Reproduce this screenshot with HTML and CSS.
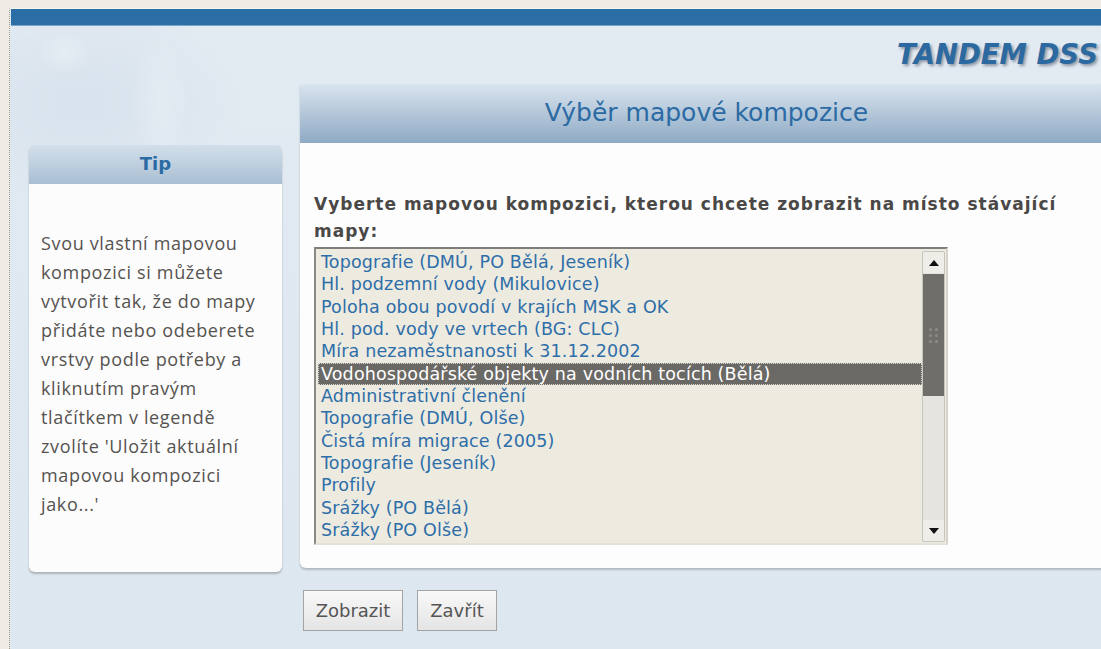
FILE: index.html
```html
<!DOCTYPE html>
<html lang="cs">
<head>
<meta charset="utf-8">
<title>TANDEM DSS – Výběr mapové kompozice</title>
<link rel="stylesheet" href="styles.css">
</head>
<body>
<div class="page">
  <div class="topbar"></div>
  <div class="brand">TANDEM DSS</div>
  <div class="content">
    <aside class="tip">
      <div class="tip-head">Tip</div>
      <div class="tip-body">Svou vlastní mapovou kompozici si můžete vytvořit tak, že do mapy přidáte nebo odeberete vrstvy podle potřeby a kliknutím pravým tlačítkem v legendě zvolíte 'Uložit aktuální mapovou kompozici jako...'</div>
    </aside>
    <main class="main">
      <section class="panel">
        <h1 class="panel-head">Výběr mapové kompozice</h1>
        <div class="panel-body">
          <p class="prompt">Vyberte mapovou kompozici, kterou chcete zobrazit na místo stávající mapy:</p>
          <div class="listbox">
            <ul class="options">
              <li>Topografie (DMÚ, PO Bělá, Jeseník)</li>
              <li>Hl. podzemní vody (Mikulovice)</li>
              <li>Poloha obou povodí v krajích MSK a OK</li>
              <li>Hl. pod. vody ve vrtech (BG: CLC)</li>
              <li>Míra nezaměstnanosti k 31.12.2002</li>
              <li class="selected">Vodohospodářské objekty na vodních tocích (Bělá)</li>
              <li>Administrativní členění</li>
              <li>Topografie (DMÚ, Olše)</li>
              <li>Čistá míra migrace (2005)</li>
              <li>Topografie (Jeseník)</li>
              <li>Profily</li>
              <li>Srážky (PO Bělá)</li>
              <li>Srážky (PO Olše)</li>
            </ul>
            <div class="scrollbar">
              <div class="sb-btn"><span class="arrow up"></span></div>
              <div class="sb-track">
                <div class="sb-thumb">
                  <div class="grip">
                    <i></i><i></i><i></i><i></i><i></i><i></i>
                  </div>
                </div>
              </div>
              <div class="sb-btn"><span class="arrow down"></span></div>
            </div>
          </div>
        </div>
      </section>
      <div class="actions">
        <button class="btn btn-show" type="button">Zobrazit</button>
        <button class="btn btn-close" type="button">Zavřít</button>
      </div>
    </main>
  </div>
</div>
</body>
</html>
```

FILE: styles.css
```css
html, body {
  margin: 0;
  padding: 0;
  height: 100%;
}

body {
  background: #efece5;
  overflow: hidden;
  font-family: "DejaVu Sans", Verdana, sans-serif;
}

.page {
  margin: 8px 0 0 9px;
  height: calc(100% - 8px);
  border-left: 1px dotted #a79d86;
  border-top: 1px solid #f7f5f0;
  padding-left: 1px;
  background-color: #dee8f1;
  background-image:
    radial-gradient(ellipse 40px 30px at 55px 45px, rgba(255,255,255,0.25), rgba(255,255,255,0) 70%),
    radial-gradient(ellipse 40px 90px at 150px 95px, rgba(255,255,255,0.22), rgba(255,255,255,0) 75%),
    radial-gradient(ellipse 200px 130px at 70px 95px, rgba(196,212,228,0.35), rgba(196,212,228,0) 80%),
    linear-gradient(#e2eaf2, #dde7f0);
  box-sizing: border-box;
}

.topbar {
  height: 16px;
  background: #2b6ea5;
  border-bottom: 1px solid #7ea4c6;
}

.brand {
  height: 58px;
  box-sizing: border-box;
  padding: 13px 3px 0 0;
  text-align: right;
  font-family: "DejaVu Sans", Verdana, sans-serif;
  font-weight: bold;
  font-style: italic;
  font-size: 27.5px;
  line-height: 30px;
  color: #2b69a0;
  text-shadow: 2px 2px 3px rgba(40, 50, 70, 0.45);
}

.content {
  display: flex;
  align-items: flex-start;
  padding-left: 18px;
}

/* Sidebar with the hint */
.tip {
  width: 253px;
  flex: none;
  margin-top: 61px;
  border-radius: 6px;
  box-shadow: 0 2px 2px rgba(80, 80, 80, 0.35);
  background: #fcfcfc;
}

.tip-head {
  height: 39px;
  border-radius: 5px 5px 0 0;
  background: linear-gradient(#d3dfea, #a9bfd3);
  text-align: center;
  font-weight: bold;
  font-size: 18px;
  line-height: 38px;
  color: #2b6aa3;
}

.tip-body {
  height: 388px;
  box-sizing: border-box;
  padding: 45px 14px 0 12px;
  font-family: "Open Sans", "DejaVu Sans", sans-serif;
  font-size: 18px;
  letter-spacing: 0.65px;
  line-height: 29px;
  color: #555350;
  border-radius: 0 0 6px 6px;
}

/* Main column */
.main {
  flex: none;
  width: 813px;
  margin-left: 18px;
}

.panel {
  background: #fdfdfd;
  border-radius: 0 0 6px 6px;
  box-shadow: 0 2px 2px rgba(80, 80, 80, 0.3);
}

.panel-head {
  margin: 0;
  height: 59px;
  background: linear-gradient(#d9e4ee, #8eaac5);
  text-align: center;
  font-weight: normal;
  font-size: 25px;
  line-height: 57px;
  color: #2b6aa3;
}

.panel-body {
  padding: 48px 14px 23px 14px;
}

.prompt {
  margin: 0 0 2px 0;
  font-weight: bold;
  font-size: 17px;
  letter-spacing: 1px;
  line-height: 27px;
  color: #4a4846;
}

/* List of map compositions */
.listbox {
  width: 634px;
  height: 298px;
  box-sizing: border-box;
  display: flex;
  background: #edeae0;
  border-style: solid;
  border-width: 2px;
  border-color: #807e7a #d6d3cc #e3e1da #8a8884;
  padding: 2px 1px 1px 2px;
}

.options {
  flex: 1;
  list-style: none;
  margin: 0;
  padding: 0;
  font-size: 17.5px;
  letter-spacing: 0.15px;
  line-height: 22.33px;
  color: #2e6ea8;
  white-space: nowrap;
  overflow: hidden;
}

.options li {
  padding: 0 3px;
}

.options li.selected {
  background: #6b6965;
  color: #ffffff;
  outline: 1px dotted #d8d6d0;
  outline-offset: -1px;
}

.scrollbar {
  width: 21px;
  flex: none;
  display: flex;
  flex-direction: column;
  border: 1px solid #c8c5be;
  border-radius: 2px;
  background: #e6e4de;
}

.sb-btn {
  height: 21px;
  flex: none;
  display: flex;
  align-items: center;
  justify-content: center;
  background: #efede8;
  border-radius: 2px;
}

.arrow {
  width: 0;
  height: 0;
  border-left: 5px solid transparent;
  border-right: 5px solid transparent;
}

.arrow.up {
  border-bottom: 6px solid #111;
}

.arrow.down {
  border-top: 6px solid #111;
}

.sb-track {
  flex: 1;
  padding-top: 1px;
  background: #e6e4de;
}

.sb-thumb {
  height: 122px;
  background: #706e6a;
  display: flex;
  align-items: center;
  justify-content: center;
}

.grip {
  display: grid;
  grid-template-columns: 3px 3px;
  gap: 3px 3px;
}

.grip i {
  width: 3px;
  height: 3px;
  border-radius: 50%;
  background: #8d8b87;
}

/* Buttons below the panel */
.actions {
  display: flex;
  gap: 14px;
  margin-top: 22px;
  padding-left: 3px;
}

.btn {
  height: 41px;
  box-sizing: border-box;
  border: 1px solid #a3a3a3;
  background: linear-gradient(#f9f9f9, #e4e4e4);
  font-family: "DejaVu Sans", Verdana, sans-serif;
  font-size: 18px;
  color: #555;
  padding: 0;
}

.btn-show {
  width: 100px;
}

.btn-close {
  width: 80px;
}
```
